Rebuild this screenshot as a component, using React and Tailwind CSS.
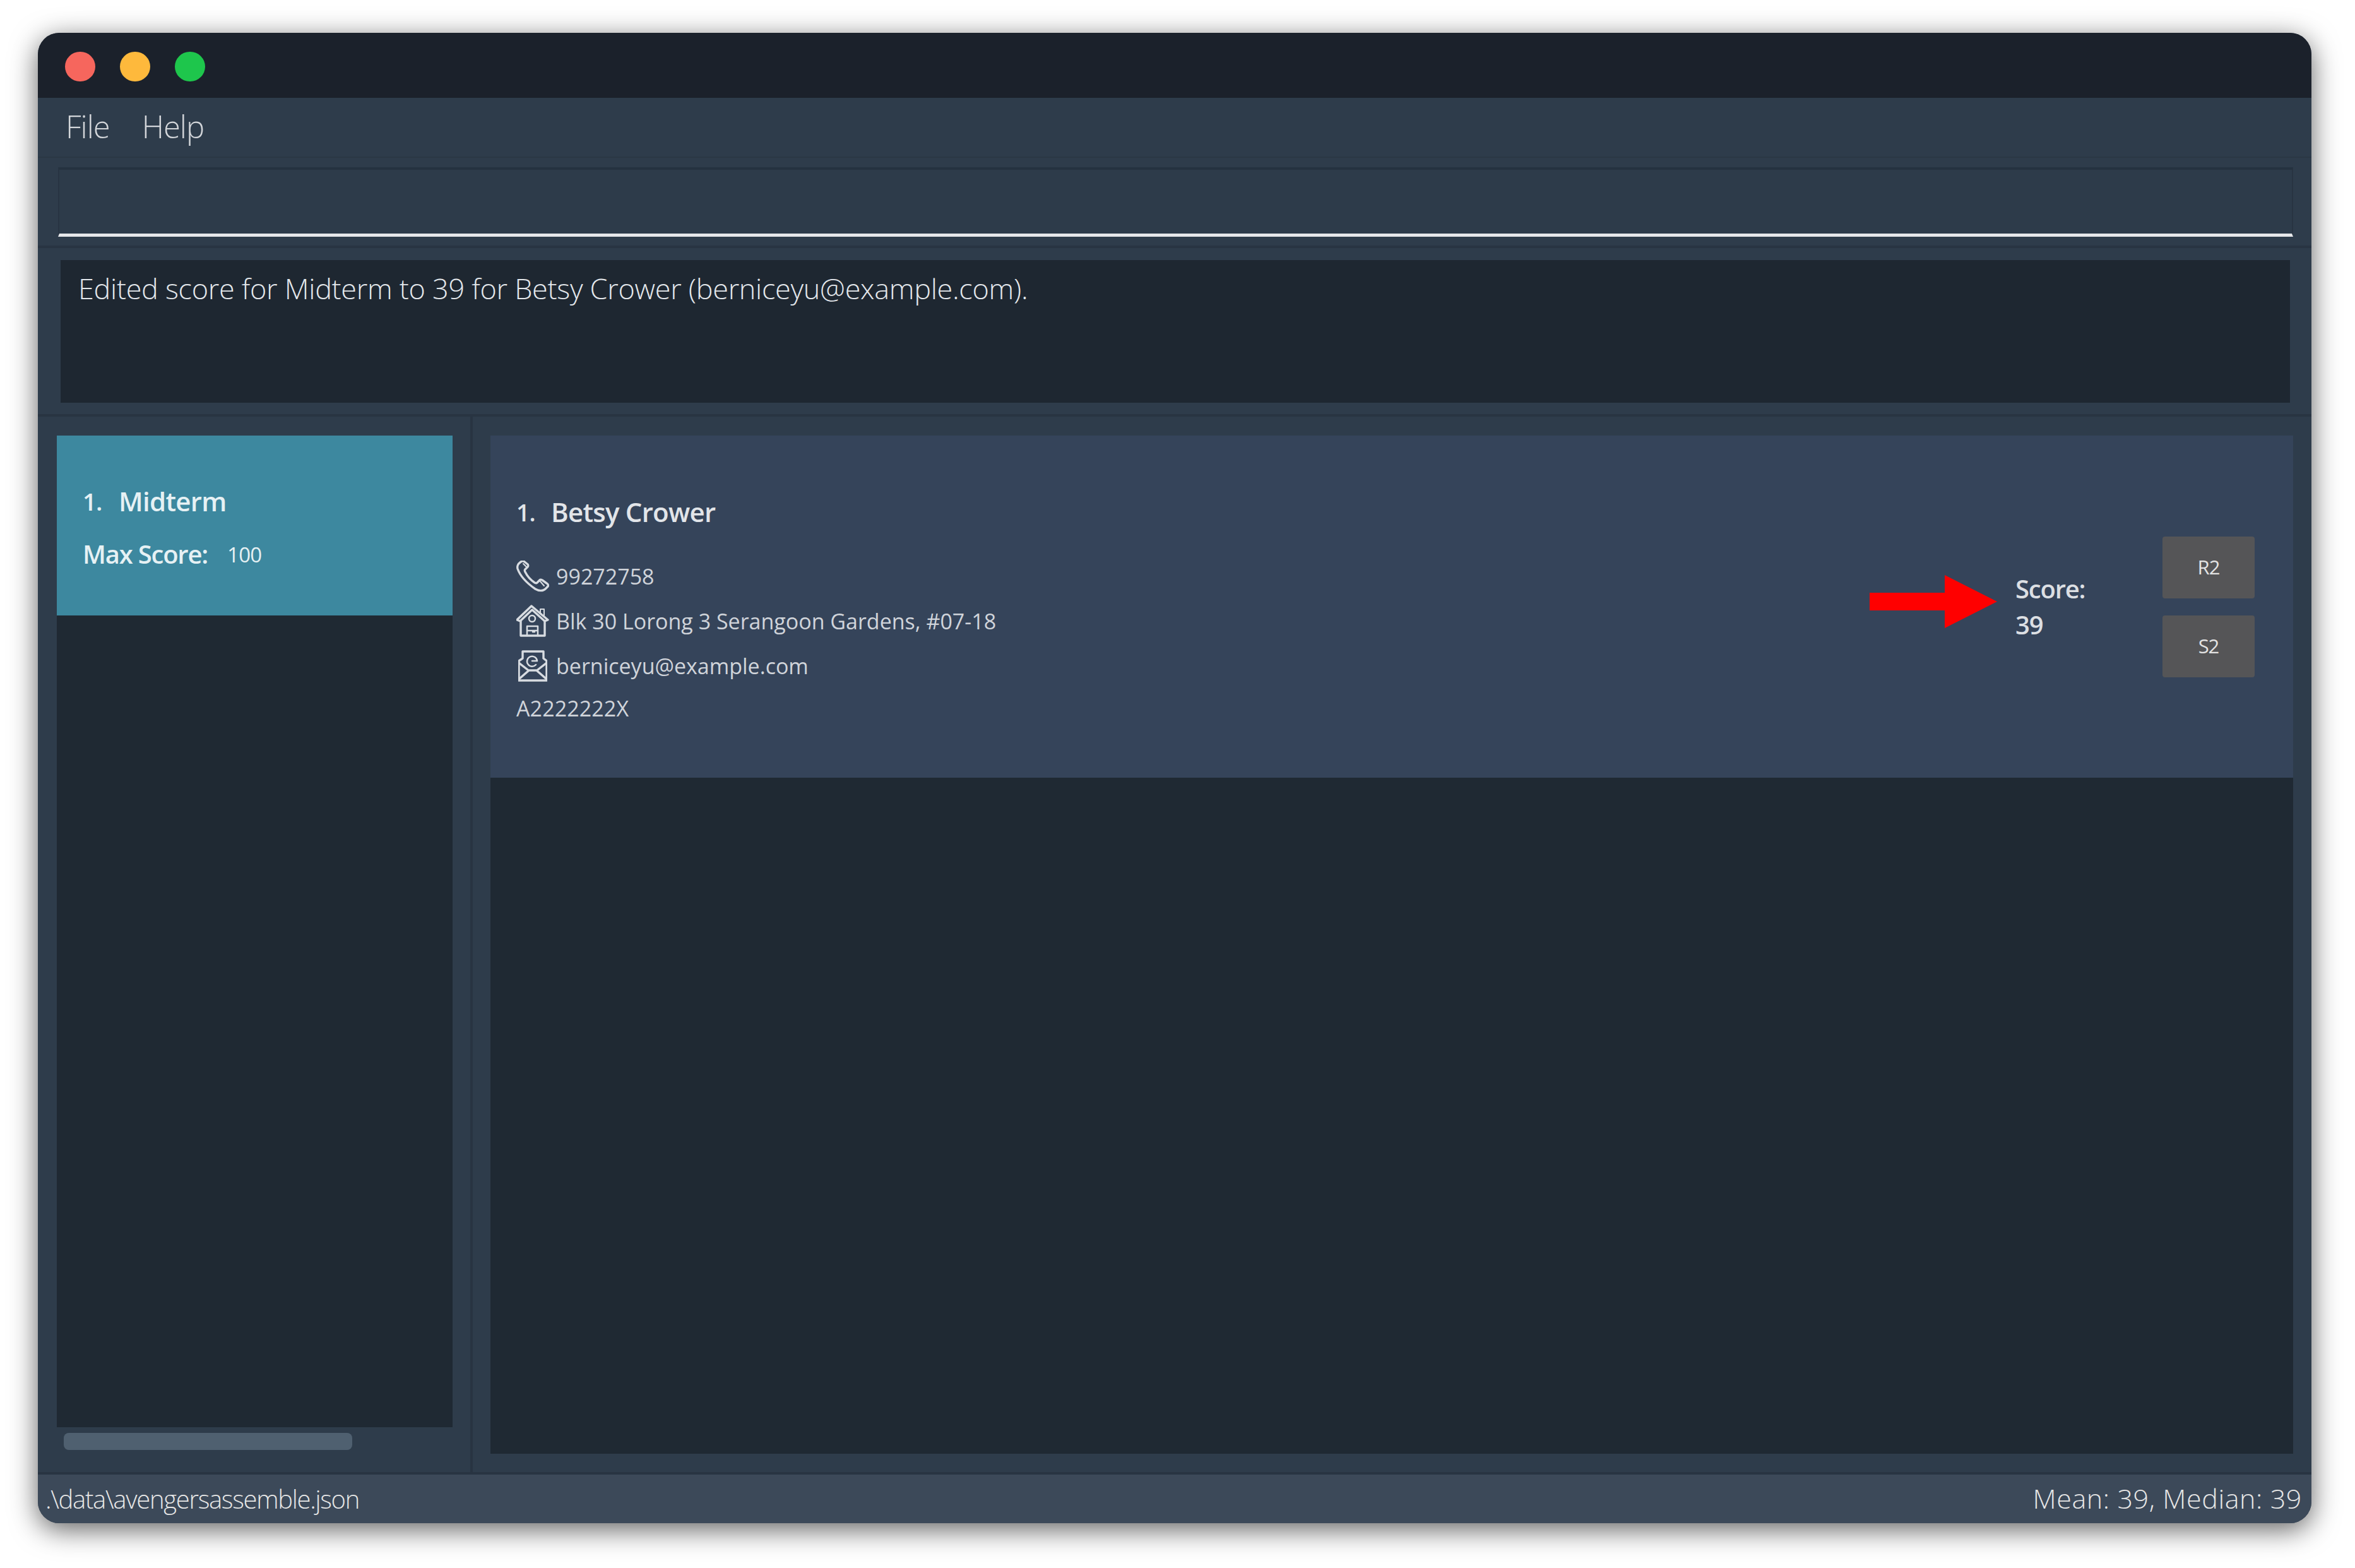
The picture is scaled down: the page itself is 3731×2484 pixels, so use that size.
const PhoneIcon = () => (
  <svg width="52" height="50" viewBox="0 0 52 50" fill="none" stroke="#d8dce1" strokeWidth="3.4" strokeLinejoin="round" strokeLinecap="round">
    <path d="M6 3C3 5 1 9 2 13C6 24 17 36 30 45C35 48 42 49 46 45L50 41C51 39 50 37 48 36L41 31C39 30 37 30 36 32L33 35C32 36 31 36 29 35C23 31 17 24 14 18C13 16 13 15 14 14L18 10C19 9 19 7 18 6L13 2C11 0 8 1 6 3Z" />
    <path d="M11 5L17 11M37 32L44 40" strokeWidth="2" />
  </svg>
);

const HouseIcon = () => (
  <svg width="52" height="51" viewBox="0 0 52 51" fill="none" stroke="#d8dce1" strokeWidth="3.4" strokeLinejoin="round" strokeLinecap="round">
    <path d="M1 24L24 2L50 24L45 26L25 8L6 26Z" />
    <path d="M7 26V49H45V26" />
    <path d="M38 14V7H44V19" strokeWidth="2" />
    <circle cx="25" cy="22" r="5" strokeWidth="2.5" />
    <path d="M17 49V34H34V49M17 41H34" strokeWidth="2.5" />
    <path d="M26 43H29" strokeWidth="2.5" />
  </svg>
);

const MailIcon = () => (
  <svg width="46" height="50" viewBox="0 0 46 50" fill="none" stroke="#d8dce1" strokeWidth="3.4" strokeLinejoin="round" strokeLinecap="round">
    <path d="M1 17V48H45V17L40 13V2H7V13Z" />
    <path d="M1 46L17 32H29L45 46M1 20L15 31M45 20L31 31" />
    <path d="M30 17A8 8 0 1 0 28 23M30 17H22" strokeWidth="2.5" />
  </svg>
);

function ContactRow({ icon, text, iconBox }) {
  return (
    <div className="flex h-[71px] items-center">
      <div className={iconBox}>{icon}</div>
      <span className="text-[34px] leading-none text-[#d0d4da]">{text}</span>
    </div>
  );
}

export default function App() {
  return (
    <div className="min-h-[2484px] bg-white pl-[60px] pt-[52px] font-['Open_Sans',sans-serif]">
      <div className="flex h-[2361px] w-[3602px] flex-col overflow-hidden rounded-[34px] bg-[#2e3c4b] shadow-[0_10px_44px_rgba(0,0,0,0.62)]">

        {/* Title bar */}
        <div className="flex h-[103px] shrink-0 items-center gap-[39px] bg-[#1b212b] pl-[43px] pt-[3px]">
          <div className="h-[47px] w-[48px] rounded-full bg-[#f6665d]" />
          <div className="h-[47px] w-[48px] rounded-full bg-[#feb93c]" />
          <div className="h-[47px] w-[48px] rounded-full bg-[#1ec64c]" />
        </div>

        {/* Menu */}
        <div className="flex h-[95px] shrink-0 items-center gap-[51px] border-b-2 border-[#2a3744] pb-[2px] pl-[44px] text-[49px] font-light tracking-[-1px] text-[#d3d6da]">
          <span>File</span>
          <span>Help</span>
        </div>

        {/* Command box */}
        <div className="h-[143px] shrink-0 border-b-4 border-[#283442] px-[32px] pt-[15px]">
          <div className="h-[110px] w-[3541px] border-x-2 border-b-[5px] border-t-[4px] border-x-[#283442] border-b-[#e6e8ea] border-t-[#253240] bg-[#2d3b4a]" />
        </div>

        {/* Result box */}
        <div className="h-[267px] shrink-0 border-b-4 border-[#283442] px-[36px] pt-[19px]">
          <div className="h-[226px] w-[3532px] bg-[#1e2731] pl-[28px] pt-[15px] text-[45px] font-light leading-[60px] tracking-[-0.3px] text-[#e4e8ec]">
            Edited score for Midterm to 39 for Betsy Crower (berniceyu@example.com).
          </div>
        </div>

        <div className="flex min-h-0 flex-1">
          {/* Exam list */}
          <div className="flex w-[689px] shrink-0 flex-col border-r-4 border-[#283442] pl-[30px] pt-[30px]">
            <div className="flex h-[1571px] w-[627px] flex-col bg-[#1f2933]">
              <div className="h-[285px] bg-[#3d889f] pl-[41px] pt-[74px] text-[#e6f1f4]">
                <div className="flex h-[60px] items-center text-[42px] font-semibold leading-none tracking-[-0.7px]">
                  <span className="w-[57px] text-[38px]">1.</span>
                  <span>Midterm</span>
                </div>
                <div className="mt-[34px] flex items-center">
                  <span className="w-[229px] text-[40px] font-semibold leading-none tracking-[-1.2px]">Max Score:</span>
                  <span className="text-[33px] leading-none tracking-[-0.7px]">100</span>
                </div>
              </div>
            </div>
            <div className="ml-[11px] mt-[9px] h-[27px] w-[457px] rounded-[8px] bg-[#4f6070]" />
          </div>

          {/* Student list */}
          <div className="flex-1 pl-[28px] pr-[29px] pt-[30px]">
            <div className="flex h-[1613px] w-[2856px] flex-col bg-[#1f2933]">
              <div className="relative flex h-[542px] items-start justify-between bg-[#35445a] pl-[41px] pr-[61px]">
                <div className="flex flex-col pt-[91px]">
                  <div className="mb-[36px] flex h-[60px] items-center text-[42px] font-semibold leading-none tracking-[-0.75px] text-[#e2e5e9]">
                    <span className="w-[55px] text-[37px]">1.</span>
                    <span>Betsy Crower</span>
                  </div>
                  <ContactRow icon={<PhoneIcon />} text="99272758" iconBox="w-[63px]" />
                  <ContactRow icon={<HouseIcon />} text="Blk 30 Lorong 3 Serangoon Gardens, #07-18" iconBox="w-[63px]" />
                  <ContactRow icon={<MailIcon />} text="berniceyu@example.com" iconBox="w-[63px] pl-[3px]" />
                  <div className="flex h-[64px] items-center text-[34px] leading-none tracking-[0.1px] text-[#d0d4da]">A2222222X</div>
                </div>

                <div className="flex items-center self-center">
                  <div className="w-[233px] text-[40px] font-semibold leading-[57px] tracking-[-1.2px] text-[#dcdfe3]">
                    <div>Score:</div>
                    <div>39</div>
                  </div>
                  <div className="flex flex-col gap-[27px]">
                    <div className="flex h-[98px] w-[146px] items-center justify-center rounded-[4px] bg-[#555557] text-[31px] tracking-[-1px] text-[#e3e3e3]">R2</div>
                    <div className="flex h-[98px] w-[146px] items-center justify-center rounded-[4px] bg-[#555557] text-[31px] tracking-[-1px] text-[#e3e3e3]">S2</div>
                  </div>
                </div>

                {/* Annotation arrow */}
                <svg className="absolute left-[2185px] top-[221px]" width="203" height="84" viewBox="0 0 203 84">
                  <polygon points="0,28 119,28 119,0 202,42 119,84 119,56 0,56" fill="#ff0000" />
                </svg>
              </div>
            </div>
          </div>
        </div>

        {/* Status bar */}
        <div className="flex h-[81px] shrink-0 items-center justify-between border-t-4 border-[#283442] bg-[#3c4959] pl-[12px] pr-[15px] font-light text-[#e6e6e6]">
          <span className="text-[40px] tracking-[-1.3px]">.\data\avengersassemble.json</span>
          <span className="text-[43px] tracking-[0.6px]">Mean: 39, Median: 39</span>
        </div>
      </div>
    </div>
  );
}
